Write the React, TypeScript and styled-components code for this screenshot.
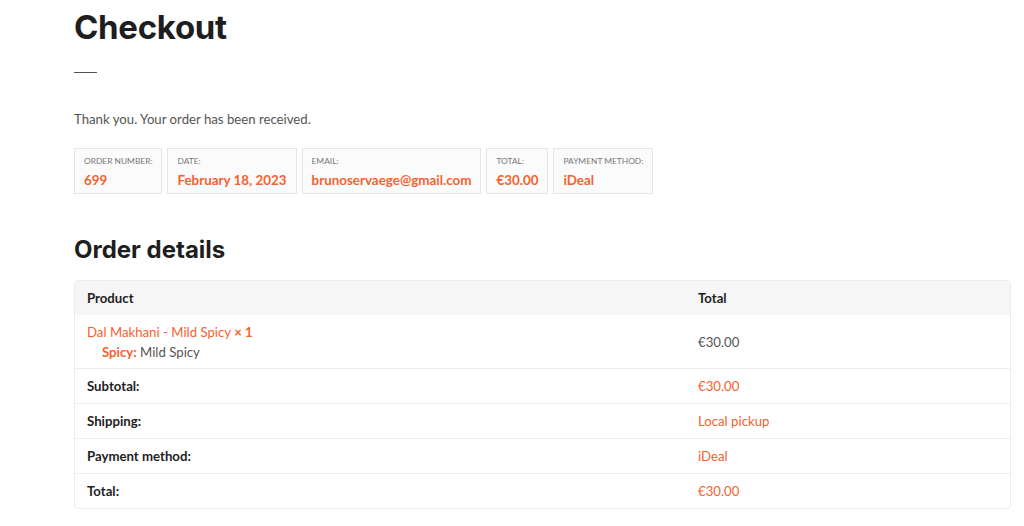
import React from 'react';
import styled, { createGlobalStyle } from 'styled-components';

const ACCENT = '#f4622f';

const GlobalStyle = createGlobalStyle`
  html, body {
    margin: 0;
    padding: 0;
    background: #fff;
  }
  body {
    font-family: Lato, "Noto Sans", "Liberation Sans", sans-serif;
    color: #555;
    -webkit-font-smoothing: antialiased;
  }
  * {
    box-sizing: border-box;
  }
`;

const STDPage = styled.main`
  padding: 5px 13px 0 74px;
`;

const STDTitle = styled.h1`
  margin: 0;
  font-family: Inter, "Noto Sans", sans-serif;
  font-size: 33px;
  line-height: 44px;
  font-weight: 700;
  color: #1e1e1e;
  letter-spacing: -0.3px;
`;

const STDRule = styled.hr`
  width: 23px;
  height: 1px;
  border: 0;
  background: #555;
  margin: 23px 0 0;
`;

const STDNotice = styled.p`
  margin: 37px 0 0;
  font-size: 13.2px;
  line-height: 18px;
  color: #555;
`;

const STDOverview = styled.ul`
  display: flex;
  gap: 5px;
  list-style: none;
  margin: 20px 0 0;
  padding: 0;
`;

const STDOverviewItem = styled.li`
  height: 46px;
  padding: 6px 9px 0;
  border: 1px solid #e6e6e6;
  background: #fbfbfb;
  font-size: 8.4px;
  line-height: 12px;
  text-transform: uppercase;
  color: #777;

  strong {
    display: block;
    margin-top: 4px;
    font-size: 13.4px;
    line-height: 18px;
    text-transform: none;
    color: ${ACCENT};
    font-weight: 700;
  }
`;

const STDSubTitle = styled.h2`
  margin: 40px 0 0;
  font-family: Inter, "Noto Sans", sans-serif;
  font-size: 24px;
  line-height: 32px;
  font-weight: 700;
  color: #1e1e1e;
`;

const STDTable = styled.table`
  width: 100%;
  margin-top: 14px;
  border-collapse: separate;
  border-spacing: 0;
  border: 1px solid #ececec;
  border-radius: 4px;
  font-size: 13.2px;
  line-height: 18px;

  th,
  td {
    text-align: left;
    padding: 8px 12px;
    vertical-align: middle;
  }

  thead th {
    height: 34px;
    background: #f6f6f6;
    color: #1e1e1e;
    font-weight: 700;
  }

  tbody tr + tr > *,
  tfoot tr > * {
    border-top: 1px solid #ededed;
  }

  tfoot th {
    color: #1e1e1e;
    font-weight: 700;
  }

  tfoot td {
    color: ${ACCENT};
  }

  tfoot tr > * {
    height: 35px;
  }
`;

const STDProductCell = styled.td`
  height: 53px;
  line-height: 20px;
  color: ${ACCENT};

  && {
    padding-top: 6px;
    padding-bottom: 6px;
  }

  span {
    font-weight: 700;
  }
`;

const STDMeta = styled.div`
  padding-left: 15px;
  color: #555;

  b {
    color: ${ACCENT};
    font-weight: 700;
  }
`;

const STDTotalCell = styled.td<{ $accent?: boolean }>`
  width: 324px;
  color: ${({ $accent }) => ($accent ? ACCENT : '#555')};
`;

const overview = [
  { label: 'Order number:', value: '699' },
  { label: 'Date:', value: 'February 18, 2023' },
  { label: 'Email:', value: 'brunoservaege@gmail.com' },
  { label: 'Total:', value: '€30.00' },
  { label: 'Payment method:', value: 'iDeal' },
];

const totals = [
  { label: 'Subtotal:', value: '€30.00' },
  { label: 'Shipping:', value: 'Local pickup' },
  { label: 'Payment method:', value: 'iDeal' },
  { label: 'Total:', value: '€30.00' },
];

const App: React.FC = () => {
  return (
    <>
      <GlobalStyle />
      <STDPage>
        <STDTitle>Checkout</STDTitle>
        <STDRule />
        <STDNotice>Thank you. Your order has been received.</STDNotice>
        <STDOverview>
          {overview.map((o) => (
            <STDOverviewItem key={o.label}>
              {o.label}
              <strong>{o.value}</strong>
            </STDOverviewItem>
          ))}
        </STDOverview>
        <STDSubTitle>Order details</STDSubTitle>
        <STDTable>
          <thead>
            <tr>
              <th>Product</th>
              <th>Total</th>
            </tr>
          </thead>
          <tbody>
            <tr>
              <STDProductCell>
                Dal Makhani - Mild Spicy <span>× 1</span>
                <STDMeta>
                  <b>Spicy:</b> Mild Spicy
                </STDMeta>
              </STDProductCell>
              <STDTotalCell>€30.00</STDTotalCell>
            </tr>
          </tbody>
          <tfoot>
            {totals.map((t) => (
              <tr key={t.label}>
                <th>{t.label}</th>
                <STDTotalCell $accent>{t.value}</STDTotalCell>
              </tr>
            ))}
          </tfoot>
        </STDTable>
      </STDPage>
    </>
  );
};

export default App;
